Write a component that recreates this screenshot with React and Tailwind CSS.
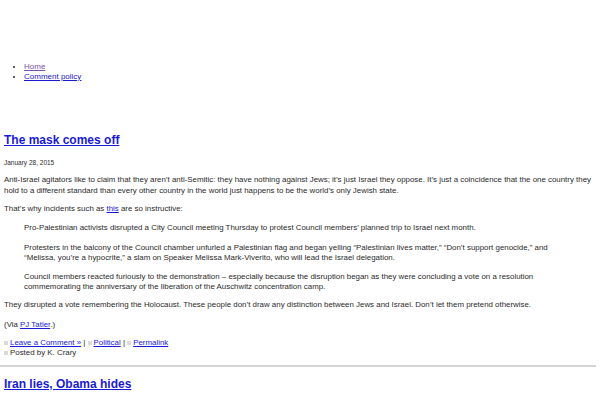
import React from "react";

function MetaIcon() {
  return <span className="inline-block w-[4px] h-[4px] bg-[#dadada] mr-[2px] align-baseline" />;
}

export default function App() {
  return (
    <div className="bg-white min-h-[400px] text-[#2a2a2a] font-['Liberation_Sans',Arial,sans-serif] text-[7.9px] leading-[11px]">
      <div className="h-[62px] pt-[52px] pl-[22px] text-white text-[8px]">K. Crary</div>
      <ul className="list-disc pl-[24px] text-[8px] leading-[10px]">
        <li>
          <a href="#" className="underline text-[#7a4fa8]">Home</a>
        </li>
        <li>
          <a href="#" className="underline text-[#1a1ad6]">Comment policy</a>
        </li>
      </ul>

      <div className="pl-[4px] pt-[50px]">
        <h2 className="text-[12px] leading-[16px] font-bold">
          <a href="#" className="underline text-[#1a1ad6]">The mask comes off</a>
        </h2>
        <div className="mt-[10px] text-[6.5px] leading-[9px]">January 28, 2015</div>

        <p className="mt-[7px]">
          Anti-Israel agitators like to claim that they aren’t anti-Semitic: they have nothing against Jews; it’s just Israel they oppose. It’s just a coincidence that the one country they hold to a different standard than every other country in the world just happens to be the world’s only Jewish state.
        </p>
        <p className="mt-[7px]">
          That’s why incidents such as{" "}
          <a href="#" className="underline text-[#1a1ad6]">this</a> are so instructive:
        </p>
        <blockquote className="pl-[20px] pr-[24px]">
          <p className="mt-[8px]">
            Pro-Palestinian activists disrupted a City Council meeting Thursday to protest Council members’ planned trip to Israel next month.
          </p>
          <p className="mt-[10px] leading-[10px]">
            Protesters in the balcony of the Council chamber unfurled a Palestinian flag and began yelling “Palestinian lives matter,” “Don’t support genocide,” and “Melissa, you’re a hypocrite,” a slam on Speaker Melissa Mark-Viverito, who will lead the Israel delegation.
          </p>
          <p className="mt-[9px] leading-[10px]">
            Council members reacted furiously to the demonstration – especially because the disruption began as they were concluding a vote on a resolution commemorating the anniversary of the liberation of the Auschwitz concentration camp.
          </p>
        </blockquote>
        <p className="mt-[7px]">
          They disrupted a vote remembering the Holocaust. These people don’t draw any distinction between Jews and Israel. Don’t let them pretend otherwise.
        </p>
        <p className="mt-[9px]">
          (Via <a href="#" className="underline text-[#1a1ad6]">PJ Tatler</a>.)
        </p>

        <div className="mt-[8px] leading-[10px]">
          <div>
            <MetaIcon />
            <a href="#" className="underline text-[#1a1ad6]">Leave a Comment »</a> |{" "}
            <MetaIcon />
            <a href="#" className="underline text-[#1a1ad6]">Political</a> |{" "}
            <MetaIcon />
            <a href="#" className="underline text-[#1a1ad6]">Permalink</a>
          </div>
          <div>
            <MetaIcon />
            Posted by K. Crary
          </div>
        </div>
      </div>
      <hr className="mt-[7px] mr-[4px] border-0 h-[2px] bg-[#d4d4d4]" />
      <div className="px-[4px] pt-[9px]">
        <h2 className="text-[12px] leading-[16px] font-bold">
          <a href="#" className="underline text-[#1a1ad6]">Iran lies, Obama hides</a>
        </h2>
      </div>
    </div>
  );
}
